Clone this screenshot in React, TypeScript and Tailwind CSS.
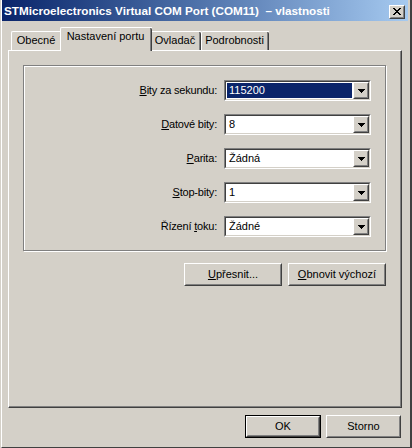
import React from "react";

const font = { fontFamily: '"Liberation Sans", Arial, sans-serif' };

function Raised({ className = "", children }: { className?: string; children?: React.ReactNode }) {
  return (
    <div className={`border border-t-white border-l-white border-r-[#404040] border-b-[#404040] bg-[#d4d0c8] ${className}`}>
      <div className="w-full h-full border border-t-[#d4d0c8] border-l-[#d4d0c8] border-r-[#808080] border-b-[#808080] flex items-center justify-center">
        {children}
      </div>
    </div>
  );
}

function Arrow() {
  return (
    <Raised className="w-[16px] h-[17px] shrink-0">
      <svg width="7" height="4" viewBox="0 0 7 4" shapeRendering="crispEdges">
        <path d="M0 0h7v1H0zM1 1h5v1H1zM2 2h3v1H2zM3 3h1v1H3z" fill="#000" />
      </svg>
    </Raised>
  );
}

function Combo({ value, selected }: { value: string; selected?: boolean }) {
  return (
    <div className="w-[147px] h-[21px] border border-t-[#808080] border-l-[#808080] border-r-white border-b-white">
      <div className="w-full h-full border border-t-[#404040] border-l-[#404040] border-r-[#d4d0c8] border-b-[#d4d0c8] bg-white flex items-center">
        <div className="flex-1 h-full p-[1px]">
          <div
            className={`h-full flex items-center pl-[2px] text-[11px] leading-none ${
              selected ? "bg-[#0a246a] text-white" : "text-black"
            }`}
          >
            {value}
          </div>
        </div>
        <Arrow />
      </div>
    </div>
  );
}

function Row({ label, value, selected }: { label: React.ReactNode; value: string; selected?: boolean }) {
  return (
    <div className="flex items-center justify-end gap-[7px]">
      <div className="text-[11px] text-black leading-none tracking-[-0.2px]">{label}</div>
      <Combo value={value} selected={selected} />
    </div>
  );
}

function Btn({ children, w, def }: { children: React.ReactNode; w: string; def?: boolean }) {
  const inner = (
    <Raised className={`${def ? "w-full h-full" : w + " h-[23px]"}`}>
      <span className="text-[11px] text-black leading-none">{children}</span>
    </Raised>
  );
  if (def) {
    return <div className={`${w} h-[23px] border border-black`}>{inner}</div>;
  }
  return inner;
}

function Tab({ label, w, active }: { label: string; w: string; active?: boolean }) {
  return (
    <div
      className={`${w} ${
        active ? "h-[24px] -mx-[2px] z-10 bg-[#d4d0c8] -mb-[1px]" : "h-[19px]"
      } border-l border-t border-white border-r-0 rounded-tl-[2px] relative flex`}
    >
      <div className="flex-1 flex items-start justify-center pt-[3px] text-[11px] text-black leading-none">
        {label}
      </div>
      <div className="w-[2px] h-full border-r border-r-[#404040] bg-[#808080] border-l-0 shrink-0 rounded-tr-[2px]" />
    </div>
  );
}

export default function App() {
  return (
    <div style={font} className="w-[412px] h-[448px] bg-[#d4d0c8] overflow-hidden">
      <div className="w-full h-full pl-[1px] flex flex-col">
        <div className="flex-1 flex flex-col border-l border-white border-r-2 border-r-[#404040] border-b border-b-[#404040] pr-[2px]">
          {/* Title bar */}
          <div className="h-[21px] shrink-0 bg-gradient-to-r from-[#0a246a] to-[#a6caf0] flex items-center pl-[2px] pr-[3px]">
            <div className="flex-1 text-white font-bold text-[11.7px] leading-none whitespace-nowrap">
              STMicroelectronics Virtual COM Port (COM11) &nbsp;– vlastnosti
            </div>
            <Raised className="w-[16px] h-[14px] mt-[2px]">
              <svg width="8" height="7" viewBox="0 0 8 7" shapeRendering="crispEdges">
                <path
                  d="M0 0h2v1H0zM6 0h2v1H6zM1 1h2v1H1zM5 1h2v1H5zM2 2h4v1H2zM3 3h2v1H3zM2 4h4v1H2zM1 5h2v1H1zM5 5h2v1H5zM0 6h2v1H0zM6 6h2v1H6z"
                  fill="#000"
                />
              </svg>
            </Raised>
          </div>

          {/* Body */}
          <div className="flex-1 flex flex-col px-[6px] pt-[5px] pb-[8px]">
            {/* Tabs */}
            <div className="h-[24px] flex items-end pl-[3px] shrink-0">
              <Tab label="Obecné" w="w-[51px]" />
              <Tab label="Nastavení portu" w="w-[92px]" active />
              <Tab label="Ovladač" w="w-[51px]" />
              <Tab label="Podrobnosti" w="w-[68px]" />
            </div>

            {/* Panel */}
            <div className="h-[358px] shrink-0 border-l border-t border-white border-r border-b border-r-[#404040] border-b-[#404040]">
              <div className="w-full h-full border-r border-b border-r-[#808080] border-b-[#808080] px-[14px] pt-[14px] flex flex-col">
                <div className="h-[186px] border border-[#808080] shadow-[inset_1px_1px_0_white,1px_1px_0_white] pr-[14px] pt-[14px] flex flex-col gap-[13px]">
                  <Row label={<><u>B</u>ity za sekundu:</>} value="115200" selected />
                  <Row label={<><u>D</u>atové bity:</>} value="8" />
                  <Row label={<><u>P</u>arita:</>} value="Žádná" />
                  <Row label={<><u>S</u>top-bity:</>} value="1" />
                  <Row label={<>Řízení <u>t</u>oku:</>} value="Žádné" />
                </div>
                <div className="mt-[12px] flex justify-end gap-[6px]">
                  <Btn w="w-[98px]"><u>U</u>přesnit...</Btn>
                  <Btn w="w-[98px]"><u>O</u>bnovit výchozí</Btn>
                </div>
              </div>
            </div>

            {/* Bottom buttons */}
            <div className="mt-[7px] flex justify-end gap-[5px] pr-[1px]">
              <Btn w="w-[76px]" def>OK</Btn>
              <Btn w="w-[75px]">Storno</Btn>
            </div>
          </div>
        </div>
      </div>
    </div>
  );
}
